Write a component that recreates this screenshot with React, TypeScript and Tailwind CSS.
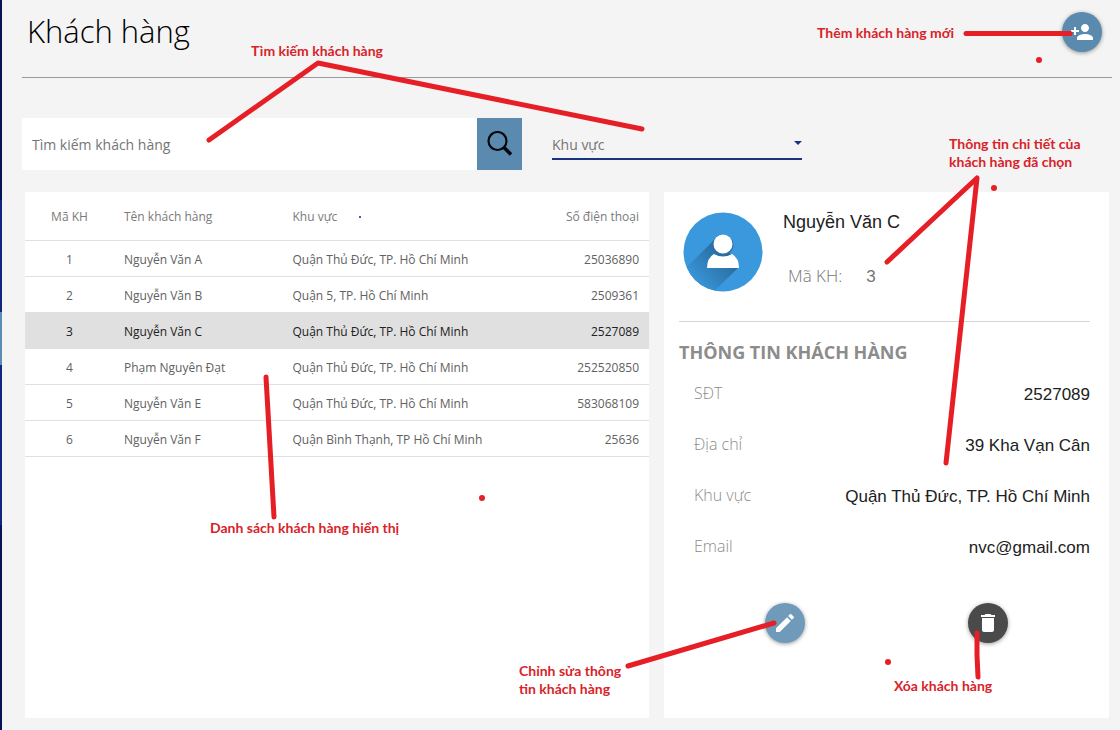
import React from "react";
import { MdPersonAdd, MdEdit, MdDelete } from "react-icons/md";

const customers = [
  { id: 1, name: "Nguyễn Văn A", area: "Quận Thủ Đức, TP. Hồ Chí Minh", phone: "25036890" },
  { id: 2, name: "Nguyễn Văn B", area: "Quận 5, TP. Hồ Chí Minh", phone: "2509361" },
  { id: 3, name: "Nguyễn Văn C", area: "Quận Thủ Đức, TP. Hồ Chí Minh", phone: "2527089" },
  { id: 4, name: "Phạm Nguyên Đạt", area: "Quận Thủ Đức, TP. Hồ Chí Minh", phone: "252520850" },
  { id: 5, name: "Nguyễn Văn E", area: "Quận Thủ Đức, TP. Hồ Chí Minh", phone: "583068109" },
  { id: 6, name: "Nguyễn Văn F", area: "Quận Bình Thạnh, TP Hồ Chí Minh", phone: "25636" },
];

const details = [
  { label: "SĐT", value: "2527089" },
  { label: "Địa chỉ", value: "39 Kha Vạn Cân" },
  { label: "Khu vực", value: "Quận Thủ Đức, TP. Hồ Chí Minh" },
  { label: "Email", value: "nvc@gmail.com" },
];

function SideStrip() {
  return (
    <div className="flex w-[2px] shrink-0 flex-col bg-[#10267f]">
      <div className="h-[200px] bg-[#081258]" />
      <div className="h-[112px]" />
      <div className="h-[53px] bg-[#5b8db3]" />
      <div className="h-[160px]" />
      <div className="flex-1 bg-[#081258]" />
    </div>
  );
}

function Header() {
  return (
    <header className="flex h-[78px] items-start justify-between border-b border-[#999999] pl-[5px] pr-[10px]">
      <h1 className="text-[31px] font-light leading-[62px] text-black">Khách hàng</h1>
      <button
        aria-label="Thêm khách hàng mới"
        className="mt-3 flex size-10 items-center justify-center rounded-full bg-[#5a8bae] text-white shadow-[0_1px_4px_rgba(0,0,0,0.4)]"
      >
        <MdPersonAdd className="size-6" />
      </button>
    </header>
  );
}

function SearchBar() {
  return (
    <div className="flex items-start gap-[30px]">
      <form className="flex h-[52px] w-[500px]">
        <input
          type="text"
          aria-label="Tìm kiếm khách hàng"
          placeholder="Tìm kiếm khách hàng"
          className="min-w-0 flex-1 bg-white px-[10px] text-[14px] text-[#333333] outline-none placeholder:text-[#757575]"
        />
        <button
          type="button"
          aria-label="Tìm kiếm"
          className="flex w-[45px] items-center justify-center bg-[#5a8bae]"
        >
          <svg viewBox="0 0 26 26" className="size-[26px]" fill="none" stroke="#05070d">
            <circle cx="10.5" cy="10" r="9" strokeWidth="2.2" />
            <path d="M16.500 16l7.500 7.500" strokeWidth="3.600" />
          </svg>
        </button>
      </form>
      <div className="relative mt-3 w-[250px]">
        <select
          aria-label="Khu vực"
          className="h-[30px] w-full appearance-none border-b-2 border-[#1a3480] bg-transparent text-[14px] text-[#757575] outline-none"
        >
          <option>Khu vực</option>
        </select>
        <svg viewBox="0 0 8 4" className="pointer-events-none absolute right-0 top-[11px] h-1 w-2">
          <path d="M0 0h8L4 4z" fill="#1a3480" />
        </svg>
      </div>
    </div>
  );
}

function CustomerTable() {
  return (
    <section className="bg-white">
      <table className="w-full table-fixed border-separate border-spacing-0 text-[12px] text-[#616161] [&_td]:border-b [&_td]:border-[#e0e0e0] [&_td]:pt-[2px] [&_th]:border-b [&_th]:border-[#e0e0e0] [&_th]:pt-[2px]">
        <colgroup>
          <col className="w-[89px]" />
          <col className="w-[27%]" />
          <col />
          <col className="w-[100px]" />
        </colgroup>
        <thead>
          <tr className="h-[49px] text-[#7a7a7a]">
            <th className="font-medium">Mã KH</th>
            <th className="pl-[10px] text-left font-medium">Tên khách hàng</th>
            <th className="pl-[10px] text-left font-medium">
              <span className="flex items-center gap-[22px]">
                Khu vực
                <span className="size-[2px] rounded-full bg-[#1a237e]" />
              </span>
            </th>
            <th className="pr-[10px] text-right font-medium">Số điện thoại</th>
          </tr>
        </thead>
        <tbody>
          {customers.map((c) => (
            <tr key={c.id} className={c.id === 3 ? "h-9 bg-[#e0e0e0] text-[#212121]" : "h-9"}>
              <td className="text-center">{c.id}</td>
              <td className="pl-[10px]">{c.name}</td>
              <td className="pl-[10px]">{c.area}</td>
              <td className="pr-[10px] text-right">{c.phone}</td>
            </tr>
          ))}
        </tbody>
      </table>
    </section>
  );
}

function Avatar() {
  return (
    <svg viewBox="0 0 80 80" className="size-20 shrink-0">
      <defs>
        <clipPath id="avatar-disc">
          <circle cx="40" cy="40" r="39.5" />
        </clipPath>
        <linearGradient id="avatar-shade" x1="0.9" y1="0.1" x2="0.25" y2="0.8">
          <stop offset="0" stopColor="#24608f" />
          <stop offset="1" stopColor="#3a99dd" />
        </linearGradient>
      </defs>
      <circle cx="40" cy="40" r="39.5" fill="#3a99dd" />
      <g clipPath="url(#avatar-disc)">
        <path d="M33 26L0 59V90H20L55 56L49 44Z" fill="url(#avatar-shade)" />
      </g>
      <path d="M24 56q0-10 7-14q9 5 18 0q7 4 7 14z" fill="#fff" />
      <circle cx="40" cy="33" r="10.5" fill="#2c6fa6" />
      <circle cx="40" cy="32" r="9.5" fill="#fff" />
    </svg>
  );
}

function CustomerDetail() {
  return (
    <section className="bg-white pl-[15px] pr-[19px]">
      <div className="flex h-[130px] gap-5 border-b border-[#d6d6d6] pl-1 pt-5">
        <Avatar />
        <div className="font-['Liberation_Sans',sans-serif]">
          <h2 className="text-[18px] leading-5 text-[#212121]">Nguyễn Văn C</h2>
          <p className="mt-[34px] flex gap-6 pl-[5px] text-[17px] leading-5 text-[#757575]">
            <span className="font-['Open_Sans',sans-serif] font-light">Mã KH:</span>
            <span className="pt-[1px]">3</span>
          </p>
        </div>
      </div>
      <h3 className="mt-[18px] text-[18px] font-bold leading-6 text-[#8c8c8c]">THÔNG TIN KHÁCH HÀNG</h3>
      <dl className="mt-[17px] flex flex-col gap-[25px]">
        {details.map((d) => (
          <div key={d.label} className="flex justify-between pl-[15px] leading-6">
            <dt className="text-[16px] font-light text-[#8c8c8c]">{d.label}</dt>
            <dd className="pt-[2px] font-['Liberation_Sans',sans-serif] text-[17px] text-[#212121]">{d.value}</dd>
          </div>
        ))}
      </dl>
      <div className="mt-[43px] flex justify-center gap-[163px] pl-1">
        <button
          aria-label="Chỉnh sửa thông tin khách hàng"
          className="flex size-10 items-center justify-center rounded-full bg-[#6f9aba] text-white shadow-[0_1px_4px_rgba(0,0,0,0.4)]"
        >
          <MdEdit className="size-6" />
        </button>
        <button
          aria-label="Xóa khách hàng"
          className="flex size-10 items-center justify-center rounded-full bg-[#4a4a4a] text-white shadow-[0_1px_4px_rgba(0,0,0,0.4)]"
        >
          <MdDelete className="size-6" />
        </button>
      </div>
    </section>
  );
}

function Annotations() {
  return (
    <div className="pointer-events-none absolute inset-0 overflow-hidden whitespace-nowrap font-['Lato',sans-serif] text-[14px] font-bold leading-[18px] text-[#d8232a]">
      <svg className="absolute left-0 top-0 h-[730px] w-[1120px]" viewBox="0 0 1120 730">
        <g fill="none" stroke="#e61e26" strokeWidth="5" strokeLinecap="round" strokeLinejoin="round">
          <path d="M209 140L318 63L642 129" />
          <path d="M966 33.5H1070" />
          <path d="M887 262L977 178L946 463" />
          <path d="M266 377L274 517" />
          <path d="M628 666L774 623" />
          <path d="M977 633V655L978 677" />
        </g>
        <g fill="#e61e26">
          <circle cx="1039" cy="60" r="3" />
          <circle cx="994" cy="188" r="3" />
          <circle cx="482" cy="498" r="3" />
          <circle cx="888" cy="662" r="3" />
        </g>
      </svg>
      <p className="absolute left-[251px] top-[42px]">Tìm kiếm khách hàng</p>
      <p className="absolute left-[817px] top-[24px]">Thêm khách hàng mới</p>
      <p className="absolute left-[949px] top-[135px]">
        Thông tin chi tiết của
        <br />
        khách hàng đã chọn
      </p>
      <p className="absolute left-[210px] top-[519px]">Danh sách khách hàng hiển thị</p>
      <p className="absolute left-[519px] top-[662px]">
        Chỉnh sửa thông
        <br />
        tin khách hàng
      </p>
      <p className="absolute left-[894px] top-[677px]">Xóa khách hàng</p>
    </div>
  );
}

export default function App() {
  return (
    <div className="relative flex min-h-screen bg-[#f4f4f4] font-['Open_Sans','Noto_Sans',sans-serif]">
      <SideStrip />
      <main className="flex min-w-0 flex-1 flex-col pb-3 pl-5 pr-2">
        <Header />
        <div className="mt-10">
          <SearchBar />
        </div>
        <div className="ml-[3px] mr-[3px] mt-[22px] grid flex-1 grid-cols-[624fr_445fr] gap-[15px]">
          <CustomerTable />
          <CustomerDetail />
        </div>
      </main>
      <Annotations />
    </div>
  );
}
